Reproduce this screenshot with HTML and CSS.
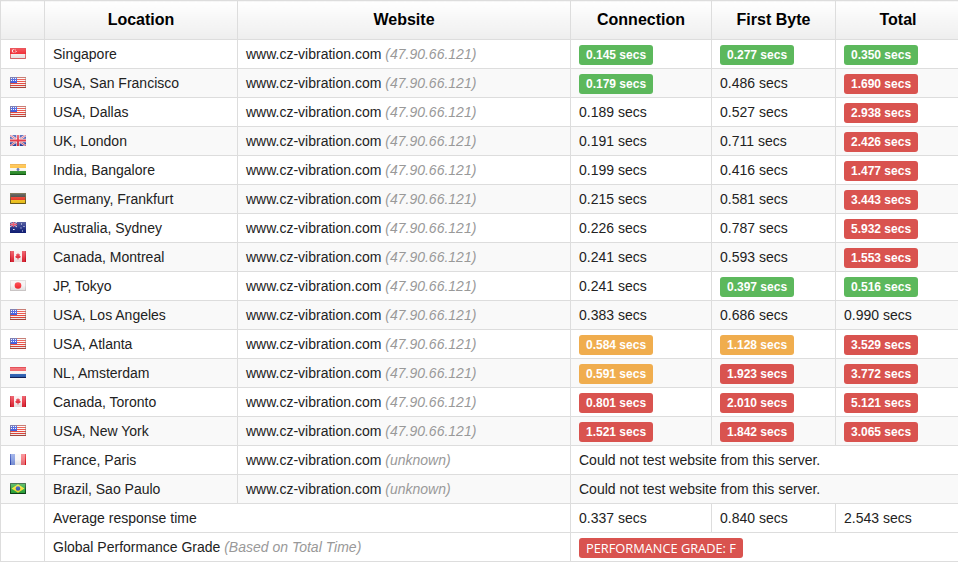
FILE: index.html
```html
<!DOCTYPE html>
<html lang="en">
<head>
<meta charset="utf-8">
<title>Website speed test</title>
<link rel="stylesheet" href="styles.css">
</head>
<body>
<svg class="defs" width="0" height="0" aria-hidden="true">
  <defs>
    <linearGradient id="gloss" x1="0" y1="0" x2="0" y2="1">
      <stop offset="0" stop-color="#fff" stop-opacity=".3"/>
      <stop offset=".5" stop-color="#fff" stop-opacity=".12"/>
      <stop offset="1" stop-color="#000" stop-opacity=".08"/>
    </linearGradient>
    <symbol id="sg" viewBox="0 0 16 11">
      <rect width="16" height="6" fill="#f01822"/><rect y="6" width="16" height="5" fill="#f8f0f0"/>
      <circle cx="3.6" cy="3" r="1.7" fill="#fff"/><circle cx="4.3" cy="3" r="1.5" fill="#f01822"/>
      <path d="M5 2h1M6 3.500h1M5 4h1" stroke="#fff" stroke-width=".6"/>
      <path d="M.5.500h15v10H.5z" fill="none" stroke="#d81018" stroke-opacity=".6"/>
    </symbol>
    <symbol id="us" viewBox="0 0 16 11">
      <rect width="16" height="11" fill="#fdf6f4"/>
      <path d="M0 .5h16M0 2.500h16M0 4.500h16M0 6.500h16M0 8.500h16M0 10.500h16" stroke="#e83c30"/>
      <rect width="7" height="6" fill="#2a48d8"/>
      <path d="M1 1.500h5M1 3.500h5" stroke="#eef2ff" stroke-dasharray="1 1"/>
      <path d="M.5.500h15v10H.5z" fill="none" stroke="#7a5a50" stroke-opacity=".5"/>
    </symbol>
    <symbol id="uk" viewBox="0 0 16 11">
      <rect width="16" height="11" fill="#2a40a8"/>
      <path d="M0 0l16 11M16 0L0 11" stroke="#f2e4e8" stroke-width="2.200"/>
      <path d="M0 0l16 11M16 0L0 11" stroke="#e0304a" stroke-width=".8"/>
      <path d="M8 0v11M0 5.500h16" stroke="#f6eef0" stroke-width="3.400"/>
      <path d="M8 0v11M0 5.500h16" stroke="#e02234" stroke-width="1.800"/>
    </symbol>
    <symbol id="in" viewBox="0 0 16 11">
      <rect width="16" height="4" fill="#ffb828"/><rect width="16" height="1" fill="#e89a18"/><rect y="4" width="16" height="3" fill="#f6f6f0"/><rect y="7" width="16" height="4" fill="#2a9028"/><rect y="10" width="16" height="1" fill="#125a14"/>
      <circle cx="8" cy="5.500" r="1.400" fill="#5a6ab0"/>
    </symbol>
    <symbol id="de" viewBox="0 0 16 11">
      <rect width="16" height="4" fill="#34342e"/><rect y="4" width="16" height="3" fill="#e82a18"/><rect y="7" width="16" height="4" fill="#f8c818"/>
      <path d="M.5.500h15v10H.5z" fill="none" stroke="#584c1c" stroke-opacity=".85"/>
    </symbol>
    <symbol id="au" viewBox="0 0 16 11">
      <rect width="16" height="11" fill="#12207c"/>
      <path d="M0 0l7 5M7 0L0 5" stroke="#e8d0dc" stroke-width="1"/>
      <path d="M3.500 0v5M0 2.500h7" stroke="#e83048" stroke-width="1.400"/>
      <path d="M3 7.500h1.600M11 2h1M13.500 4.500h1M10.500 6h1M12 9h1" stroke="#f0f0ff" stroke-width="1.200"/>
    </symbol>
    <symbol id="ca" viewBox="0 0 16 11">
      <rect width="16" height="11" fill="#f8eeee"/>
      <rect width="1" height="11" fill="#c81020"/><rect x="1" width="3" height="11" fill="#e82838"/><rect x="12" width="3" height="11" fill="#e82838"/><rect x="15" width="1" height="11" fill="#c81020"/>
      <path d="M8 2l1 1.500 1-.4-.4 2 1.200.2-.6 1.400-1.800.5v1.300h-.8V7.200L5.800 6.700 5.200 5.300l1.200-.2-.4-2 1 .4z" fill="#e02030"/>
    </symbol>
    <symbol id="jp" viewBox="0 0 16 11">
      <rect width="16" height="11" fill="#f5f2f2"/>
      <circle cx="8" cy="5.500" r="3.300" fill="#f8222a"/>
      <path d="M.5.500h15v10H.5z" fill="none" stroke="#b0a8a8" stroke-opacity=".4"/>
    </symbol>
    <symbol id="nl" viewBox="0 0 16 11">
      <rect width="16" height="4" fill="#f04a50"/><rect y="4" width="16" height="3" fill="#f8f2f2"/><rect y="7" width="16" height="4" fill="#2a60b8"/>
      <path d="M0 .5h16" stroke="#d80c18"/><path d="M0 10.500h16" stroke="#12205c"/>
    </symbol>
    <symbol id="fr" viewBox="0 0 16 11">
      <rect width="1" height="11" fill="#2a48b8"/><rect x="1" width="4" height="11" fill="#8098e0"/><rect x="5" width="6" height="11" fill="#f8f6f6"/><rect x="11" width="4" height="11" fill="#f47078"/><rect x="15" width="1" height="11" fill="#e01018"/>
    </symbol>
    <symbol id="br" viewBox="0 0 16 11">
      <rect width="16" height="11" fill="#28a838"/>
      <path d="M8 1.200L14.500 5.500 8 9.800 1.500 5.500z" fill="#f6e028"/>
      <circle cx="8" cy="5.500" r="2.300" fill="#2a50b0"/>
      <path d="M.5.500h15v10H.5z" fill="none" stroke="#063010" stroke-opacity=".85"/>
    </symbol>
    <symbol id="flag-gloss" viewBox="0 0 16 11"><rect width="16" height="11" fill="url(#gloss)"/></symbol>
  </defs>
</svg>
<table class="results">
  <colgroup>
    <col class="c-flag"><col class="c-loc"><col class="c-web"><col class="c-conn"><col class="c-first"><col class="c-total">
  </colgroup>
  <thead>
    <tr><th></th><th>Location</th><th>Website</th><th>Connection</th><th>First Byte</th><th>Total</th></tr>
  </thead>
  <tbody>
    <tr><td class="f"><svg class="flag"><use href="#sg"/><use href="#flag-gloss"/></svg></td><td>Singapore</td><td>www.cz-vibration.com <em>(47.90.66.121)</em></td><td><span class="badge ok">0.145 secs</span></td><td><span class="badge ok">0.277 secs</span></td><td><span class="badge ok">0.350 secs</span></td></tr>
    <tr><td class="f"><svg class="flag"><use href="#us"/><use href="#flag-gloss"/></svg></td><td>USA, San Francisco</td><td>www.cz-vibration.com <em>(47.90.66.121)</em></td><td><span class="badge ok">0.179 secs</span></td><td>0.486 secs</td><td><span class="badge bad">1.690 secs</span></td></tr>
    <tr><td class="f"><svg class="flag"><use href="#us"/><use href="#flag-gloss"/></svg></td><td>USA, Dallas</td><td>www.cz-vibration.com <em>(47.90.66.121)</em></td><td>0.189 secs</td><td>0.527 secs</td><td><span class="badge bad">2.938 secs</span></td></tr>
    <tr><td class="f"><svg class="flag"><use href="#uk"/><use href="#flag-gloss"/></svg></td><td>UK, London</td><td>www.cz-vibration.com <em>(47.90.66.121)</em></td><td>0.191 secs</td><td>0.711 secs</td><td><span class="badge bad">2.426 secs</span></td></tr>
    <tr><td class="f"><svg class="flag"><use href="#in"/><use href="#flag-gloss"/></svg></td><td>India, Bangalore</td><td>www.cz-vibration.com <em>(47.90.66.121)</em></td><td>0.199 secs</td><td>0.416 secs</td><td><span class="badge bad">1.477 secs</span></td></tr>
    <tr><td class="f"><svg class="flag"><use href="#de"/><use href="#flag-gloss"/></svg></td><td>Germany, Frankfurt</td><td>www.cz-vibration.com <em>(47.90.66.121)</em></td><td>0.215 secs</td><td>0.581 secs</td><td><span class="badge bad">3.443 secs</span></td></tr>
    <tr><td class="f"><svg class="flag"><use href="#au"/><use href="#flag-gloss"/></svg></td><td>Australia, Sydney</td><td>www.cz-vibration.com <em>(47.90.66.121)</em></td><td>0.226 secs</td><td>0.787 secs</td><td><span class="badge bad">5.932 secs</span></td></tr>
    <tr><td class="f"><svg class="flag"><use href="#ca"/><use href="#flag-gloss"/></svg></td><td>Canada, Montreal</td><td>www.cz-vibration.com <em>(47.90.66.121)</em></td><td>0.241 secs</td><td>0.593 secs</td><td><span class="badge bad">1.553 secs</span></td></tr>
    <tr><td class="f"><svg class="flag"><use href="#jp"/><use href="#flag-gloss"/></svg></td><td>JP, Tokyo</td><td>www.cz-vibration.com <em>(47.90.66.121)</em></td><td>0.241 secs</td><td><span class="badge ok">0.397 secs</span></td><td><span class="badge ok">0.516 secs</span></td></tr>
    <tr><td class="f"><svg class="flag"><use href="#us"/><use href="#flag-gloss"/></svg></td><td>USA, Los Angeles</td><td>www.cz-vibration.com <em>(47.90.66.121)</em></td><td>0.383 secs</td><td>0.686 secs</td><td>0.990 secs</td></tr>
    <tr><td class="f"><svg class="flag"><use href="#us"/><use href="#flag-gloss"/></svg></td><td>USA, Atlanta</td><td>www.cz-vibration.com <em>(47.90.66.121)</em></td><td><span class="badge warn">0.584 secs</span></td><td><span class="badge warn">1.128 secs</span></td><td><span class="badge bad">3.529 secs</span></td></tr>
    <tr><td class="f"><svg class="flag"><use href="#nl"/><use href="#flag-gloss"/></svg></td><td>NL, Amsterdam</td><td>www.cz-vibration.com <em>(47.90.66.121)</em></td><td><span class="badge warn">0.591 secs</span></td><td><span class="badge bad">1.923 secs</span></td><td><span class="badge bad">3.772 secs</span></td></tr>
    <tr><td class="f"><svg class="flag"><use href="#ca"/><use href="#flag-gloss"/></svg></td><td>Canada, Toronto</td><td>www.cz-vibration.com <em>(47.90.66.121)</em></td><td><span class="badge bad">0.801 secs</span></td><td><span class="badge bad">2.010 secs</span></td><td><span class="badge bad">5.121 secs</span></td></tr>
    <tr><td class="f"><svg class="flag"><use href="#us"/><use href="#flag-gloss"/></svg></td><td>USA, New York</td><td>www.cz-vibration.com <em>(47.90.66.121)</em></td><td><span class="badge bad">1.521 secs</span></td><td><span class="badge bad">1.842 secs</span></td><td><span class="badge bad">3.065 secs</span></td></tr>
    <tr><td class="f"><svg class="flag"><use href="#fr"/><use href="#flag-gloss"/></svg></td><td>France, Paris</td><td>www.cz-vibration.com <em>(unknown)</em></td><td colspan="3">Could not test website from this server.</td></tr>
    <tr><td class="f"><svg class="flag"><use href="#br"/><use href="#flag-gloss"/></svg></td><td>Brazil, Sao Paulo</td><td>www.cz-vibration.com <em>(unknown)</em></td><td colspan="3">Could not test website from this server.</td></tr>
  </tbody>
  <tfoot>
    <tr><td></td><td colspan="2">Average response time</td><td>0.337 secs</td><td>0.840 secs</td><td>2.543 secs</td></tr>
    <tr><td></td><td colspan="2">Global Performance Grade <em>(Based on Total Time)</em></td><td colspan="3"><span class="badge bad grade">PERFORMANCE GRADE: F</span></td></tr>
  </tfoot>
</table>
</body>
</html>
```

FILE: styles.css
```css
html, body {
  margin: 0;
  padding: 0;
  background: #fff;
  overflow: hidden;
}

.defs {
  position: absolute;
}

.results {
  border-collapse: collapse;
  table-layout: fixed;
  width: 960px;
  font-family: "Liberation Sans", Arial, sans-serif;
  font-size: 14px;
  line-height: 20px;
  color: #222;
  box-shadow: 0 1px 0 #eee;
}

.c-flag { width: 44px; }
.c-loc { width: 193px; }
.c-web { width: 333px; }
.c-conn { width: 141px; }
.c-first { width: 124px; }
.c-total { width: 125px; }

.results th,
.results td {
  border: 1px solid #ddd;
  padding: 4px 8px;
  text-align: left;
  vertical-align: middle;
}

.results th {
  padding: 8px;
  height: 22px;
  font-size: 16px;
  line-height: 22px;
  font-weight: 700;
  color: #000;
  text-align: center;
  background: linear-gradient(to bottom, #fff, #eee);
}

.results tbody tr:nth-child(even) td {
  background: #f9f9f9;
}

.results td.f {
  padding: 0 0 0 9px;
  line-height: 0;
}

.flag {
  display: block;
  width: 16px;
  height: 11px;
  margin-top: -1px;
}

.results em {
  font-style: italic;
  color: #999;
}

.badge {
  display: inline-block;
  padding: 0 7px;
  height: 20px;
  margin: 1px 0 -1px;
  line-height: 20px;
  border-radius: 3px;
  font-size: 12px;
  font-weight: 700;
  color: #fff;
  vertical-align: top;
}

.ok { background: #5cb85c; }
.warn { background: #f0ad4e; }
.bad { background: #d9534f; }

.grade {
  font-family: "Open Sans", sans-serif;
  font-weight: 400;
  font-size: 12.8px;
}
```
